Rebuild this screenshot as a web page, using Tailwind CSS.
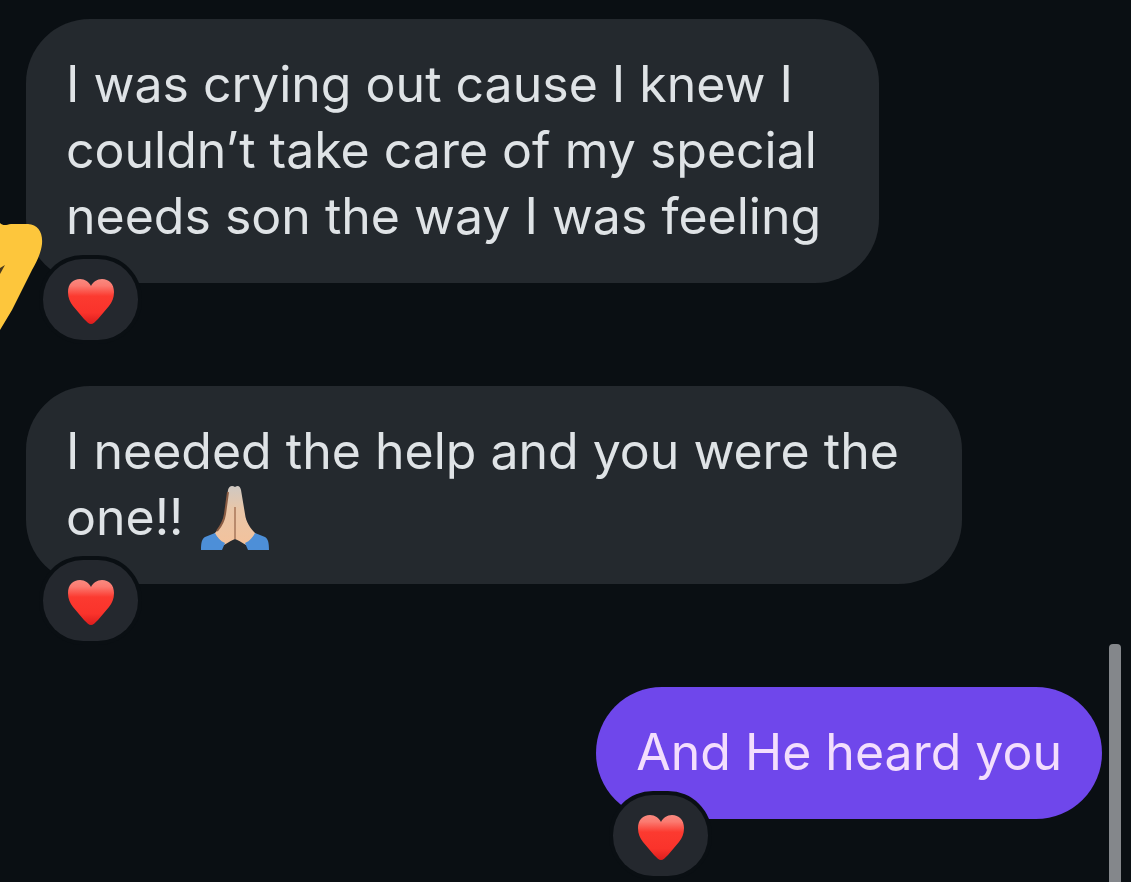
<!DOCTYPE html>
<html lang="en">
<head>
    <meta charset="UTF-8">
    <meta name="viewport" content="width=device-width, initial-scale=1.0">
    <title>Messages</title>
    <script src="https://cdn.jsdelivr.net/npm/@tailwindcss/browser@4"></script>
</head>
<body class="bg-[#0a0f13] font-[Inter,sans-serif] overflow-hidden">
    <!-- shared heart glyph -->
    <svg class="absolute w-0 h-0" aria-hidden="true">
        <defs>
            <linearGradient id="heartFill" x1="0" y1="0" x2="0" y2="1">
                <stop offset="0" stop-color="#f98a80"></stop>
                <stop offset="0.15" stop-color="#fb7a70"></stop>
                <stop offset="0.38" stop-color="#fc3a30"></stop>
                <stop offset="0.75" stop-color="#fa332b"></stop>
                <stop offset="1" stop-color="#dc1d1d"></stop>
            </linearGradient>
        </defs>
        <symbol id="heart" viewBox="0 0 46 46">
            <path fill="url(#heartFill)" d="M23 46C21 46 19 44 16 41L5 28C2 24 0 20 0 14C0 6 5 1 12 1C17 1 21 4 23 8C25 4 29 1 34 1C41 1 46 6 46 14C46 20 44 24 41 28L30 41C27 44 25 46 23 46Z"></path>
        </symbol>
    </svg>

    <main class="relative min-h-screen flex flex-col gap-[103px] pt-[19px] pl-[26px] pr-[29px] text-[50px] leading-[66px] font-[420] text-[#dfe3e6]">
        <div class="relative self-start max-w-[853px] rounded-[64px] bg-[#24292e] px-10 pt-8 pb-[34px]">
            <p>I was crying out cause I knew I couldn’t take care of my special needs son the way I was feeling</p>
            <button type="button" aria-label="Heart reaction" class="absolute left-[17px] -bottom-[57px] flex items-center justify-center w-[95px] h-[81px] pt-0.5 rounded-[40px] bg-[#24282e] ring-4 ring-[#0a0f13]">
                <svg class="w-[46px] h-[46px]"><use href="#heart"></use></svg>
            </button>
        </div>

        <div class="relative self-start max-w-[936px] rounded-[64px] bg-[#24292e] px-10 pt-8 pb-[34px]">
            <p>I needed the help and you were the one!!
                <svg class="inline-block align-middle ml-0.5 -mt-2 -mb-px w-[70px] h-[66px]" viewBox="0 0 70 66" role="img" aria-label="Folded hands">
                    <defs>
                        <linearGradient id="skin" x1="0" y1="0" x2="0" y2="1">
                            <stop offset="0" stop-color="#cfc8c2"></stop>
                            <stop offset="0.4" stop-color="#e9c6a8"></stop>
                            <stop offset="1" stop-color="#f3c29c"></stop>
                        </linearGradient>
                    </defs>
                    <path fill="url(#skin)" d="M35 2C32 0 29 1 28 5L25 29C24 37 20 43 14 49L24 60C29 57 32 55 35 54C38 55 41 57 46 60L56 49C50 43 46 37 45 29L41 5C40 1 38 0 35 2Z"></path>
                    <path fill="none" stroke="#b98a6c" stroke-width="2" d="M35 22V54"></path>
                    <path fill="none" stroke="#8a5c43" stroke-width="2" d="M28 7L25 29C24 36 21 41 17 46"></path>
                    <path fill="#4d8fd8" d="M15 48L5 52C2 54 1 57 1 65H22L25 58C20 56 17 52 15 48Z"></path>
                    <path fill="#4d8fd8" d="M55 48L65 52C68 54 69 57 69 65H48L45 58C50 56 53 52 55 48Z"></path>
                </svg>
            </p>
            <button type="button" aria-label="Heart reaction" class="absolute left-[17px] -bottom-[57px] flex items-center justify-center w-[95px] h-[81px] pt-0.5 rounded-[40px] bg-[#24282e] ring-4 ring-[#0a0f13]">
                <svg class="w-[46px] h-[46px]"><use href="#heart"></use></svg>
            </button>
        </div>

        <div class="relative self-end rounded-[66px] bg-[#6f47eb] px-10 pt-8 pb-[34px] text-[#f3defd]">
            <p>And He heard you</p>
            <button type="button" aria-label="Heart reaction" class="absolute left-[17px] -bottom-[57px] flex items-center justify-center w-[95px] h-[81px] pt-0.5 rounded-[40px] bg-[#24282e] ring-4 ring-[#0a0f13]">
                <svg class="w-[46px] h-[46px]"><use href="#heart"></use></svg>
            </button>
        </div>

        <!-- sticker cut off by the left edge -->
        <svg class="absolute left-0 top-[222px] w-[43px] h-[108px]" viewBox="0 0 43 108" aria-hidden="true">
            <path fill="#fdc63c" d="M0 1C3 4 6 3 11 2L28 2C38 3 43 10 42 22C41 31 37 39 32 48L12 88L0 108Z"></path>
            <path fill="#4a3a1c" d="M0 46L5 43L0 52Z"></path>
        </svg>

        <!-- scrollbar thumb -->
        <div class="absolute right-[10px] top-[644px] bottom-0 w-3 rounded-t-sm bg-[#84878b]"></div>
    </main>
</body>
</html>
